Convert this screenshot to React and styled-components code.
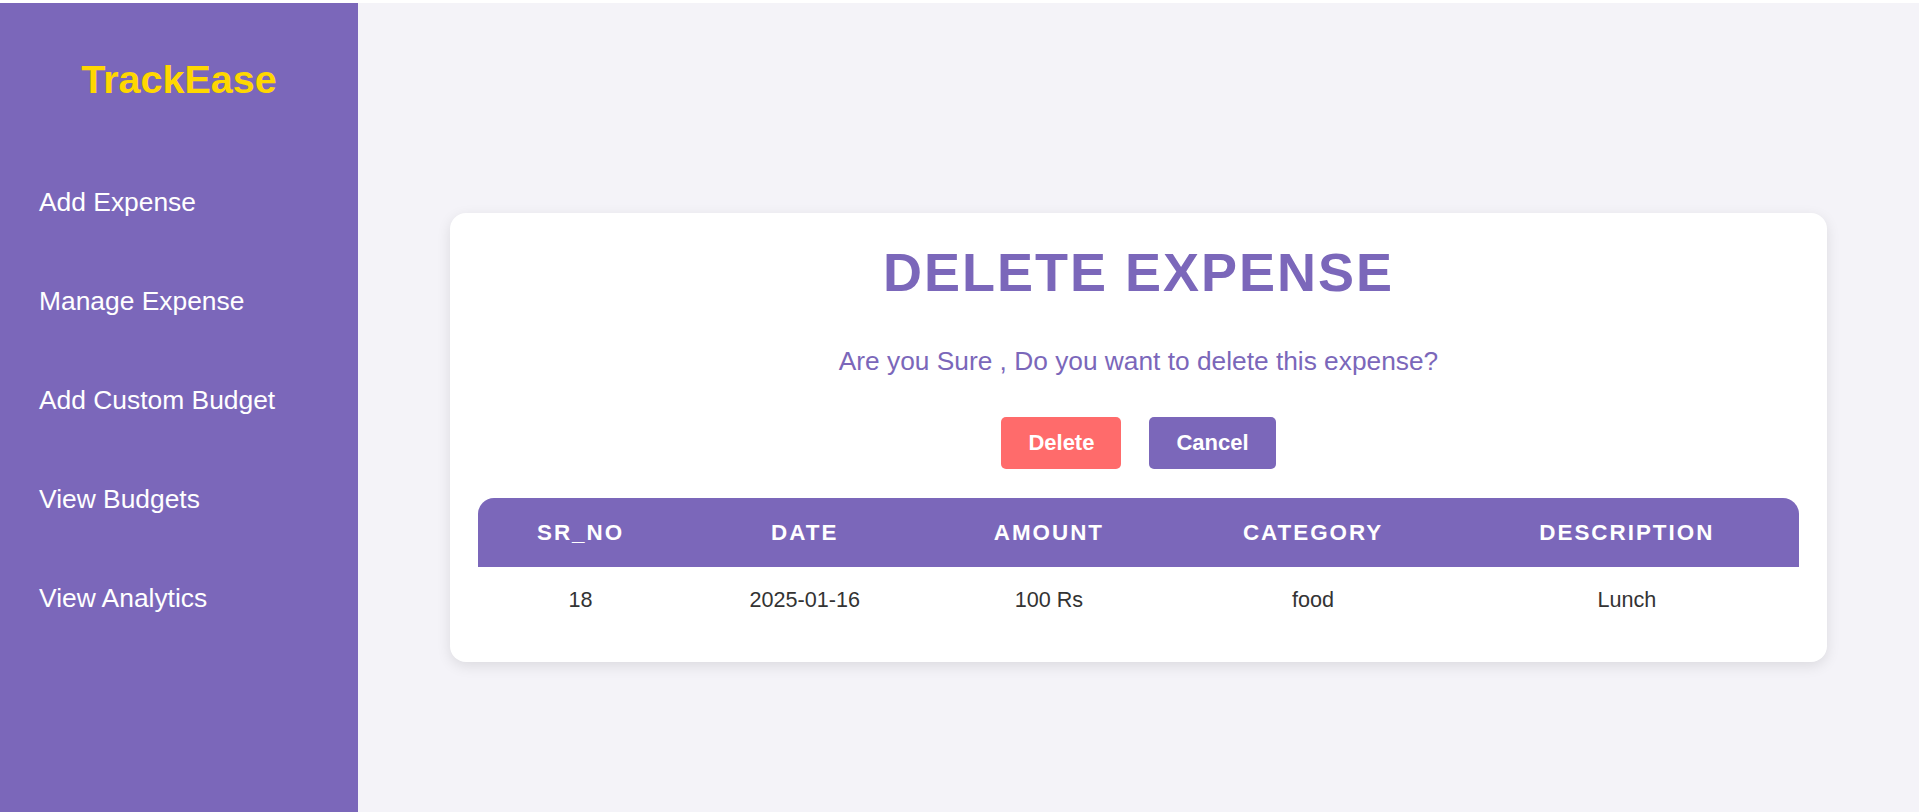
import React from "react";
import styled, { createGlobalStyle } from "styled-components";

const PURPLE = "#7b67ba";

const GlobalStyle = createGlobalStyle`
  html, body {
    margin: 0;
    padding: 0;
    background: #ffffff;
    font-family: "Liberation Sans", Arial, sans-serif;
  }
  * { box-sizing: border-box; }
`;

const Layout = styled.div`
  display: flex;
  margin-top: 3px;
  height: 809px;
`;

const Sidebar = styled.aside`
  width: 358px;
  flex-shrink: 0;
  background: ${PURPLE};
  padding: 54px 0 0 0;
  display: flex;
  flex-direction: column;
`;

const Logo = styled.h1`
  margin: 0;
  text-align: center;
  color: #ffd700;
  font-size: 39.5px;
  line-height: 45px;
  font-weight: 700;
`;

const Nav = styled.nav`
  display: flex;
  flex-direction: column;
  gap: 69px;
  margin-top: 85px;
  padding-left: 39px;
`;

const NavLink = styled.a`
  color: #ffffff;
  font-size: 26.4px;
  line-height: 30px;
  text-decoration: none;
  cursor: pointer;
`;

const Main = styled.main`
  flex: 1;
  background: #f4f3f8;
  padding: 210px 92px 0 92px;
`;

const Card = styled.section`
  background: #ffffff;
  border-radius: 16px;
  box-shadow: 0 4px 14px rgba(0, 0, 0, 0.1);
  padding: 26px 28px 29px 28px;
  display: flex;
  flex-direction: column;
  align-items: center;
`;

const Title = styled.h2`
  margin: 0;
  color: ${PURPLE};
  font-size: 54px;
  line-height: 67px;
  font-weight: 700;
  letter-spacing: 2px;
  text-align: center;
`;

const Message = styled.p`
  margin: 40px 0 0 0;
  color: ${PURPLE};
  font-size: 26.3px;
  line-height: 30px;
  text-align: center;
`;

const Actions = styled.div`
  display: flex;
  gap: 28px;
  margin-top: 41px;
`;

const Button = styled.button`
  height: 52px;
  padding: 0 27px;
  border: none;
  border-radius: 5px;
  background: ${(p) => (p.$variant === "danger" ? "#ff6b6b" : PURPLE)};
  color: #ffffff;
  font-family: inherit;
  font-size: 22px;
  font-weight: 700;
  cursor: pointer;
`;

const Table = styled.table`
  width: 100%;
  margin-top: 29px;
  border-collapse: separate;
  border-spacing: 0;
`;

const HeadCell = styled.th`
  background: ${PURPLE};
  color: #ffffff;
  height: 69px;
  font-size: 22.4px;
  font-weight: 700;
  letter-spacing: 2px;
  text-transform: uppercase;
  text-align: center;
  padding: 0;
  width: ${(p) => p.$w}px;
  &:first-child { border-top-left-radius: 16px; }
  &:last-child { border-top-right-radius: 16px; }
`;

const Cell = styled.td`
  height: 66px;
  color: #333333;
  font-size: 21.6px;
  text-align: center;
  padding: 0;
`;

const columns = [
  { key: "sr", label: "SR_NO", w: 205 },
  { key: "date", label: "DATE", w: 243 },
  { key: "amount", label: "AMOUNT", w: 245 },
  { key: "category", label: "CATEGORY", w: 283 },
  { key: "description", label: "DESCRIPTION", w: 344 },
];

const row = {
  sr: "18",
  date: "2025-01-16",
  amount: "100 Rs",
  category: "food",
  description: "Lunch",
};

const navItems = [
  "Add Expense",
  "Manage Expense",
  "Add Custom Budget",
  "View Budgets",
  "View Analytics",
];

export default function App() {
  return (
    <>
      <GlobalStyle />
      <Layout>
        <Sidebar>
          <Logo>TrackEase</Logo>
          <Nav>
            {navItems.map((n) => (
              <NavLink key={n}>{n}</NavLink>
            ))}
          </Nav>
        </Sidebar>
        <Main>
          <Card>
            <Title>DELETE EXPENSE</Title>
            <Message>Are you Sure , Do you want to delete this expense?</Message>
            <Actions>
              <Button $variant="danger">Delete</Button>
              <Button>Cancel</Button>
            </Actions>
            <Table>
              <thead>
                <tr>
                  {columns.map((c) => (
                    <HeadCell key={c.key} $w={c.w}>
                      {c.label}
                    </HeadCell>
                  ))}
                </tr>
              </thead>
              <tbody>
                <tr>
                  {columns.map((c) => (
                    <Cell key={c.key}>{row[c.key]}</Cell>
                  ))}
                </tr>
              </tbody>
            </Table>
          </Card>
        </Main>
      </Layout>
    </>
  );
}
